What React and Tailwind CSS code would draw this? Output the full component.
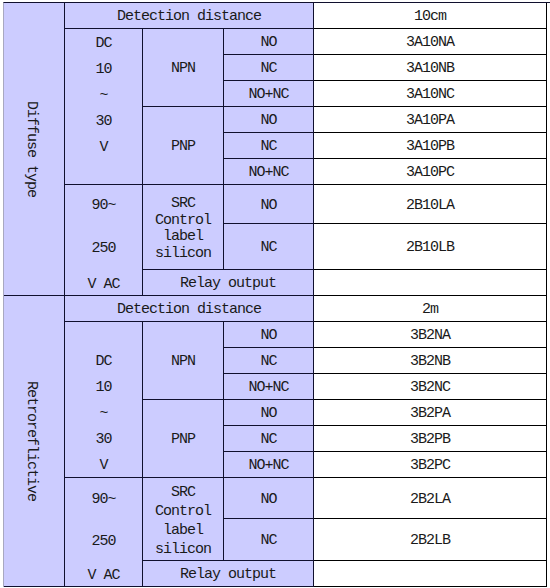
import React from 'react';

const rowStart = {
  1: 'row-start-1', 2: 'row-start-2', 3: 'row-start-3', 4: 'row-start-4', 5: 'row-start-5',
  6: 'row-start-6', 7: 'row-start-7', 8: 'row-start-8', 9: 'row-start-9', 10: 'row-start-10',
};

const sections = [
  {
    title: 'Diffuse type',
    distance: '10cm',
    rows: 'grid-rows-[26px_26px_26px_26px_26px_26px_26px_39px_46px_26px]',
    top: true,
    dcAlign: 'justify-start',
    acHeights: ['h-[39px]', 'h-[46px]'],
    srcLeading: 'leading-[16.5px]',
    codes: ['3A10NA', '3A10NB', '3A10NC', '3A10PA', '3A10PB', '3A10PC'],
    relayCodes: ['2B10LA', '2B10LB'],
  },
  {
    title: 'Retroreflictive',
    distance: '2m',
    rows: 'grid-rows-[26px_26px_26px_26px_26px_26px_26px_41px_42px_26px]',
    top: false,
    dcAlign: 'justify-end',
    acHeights: ['h-[41px]', 'h-[42px]'],
    srcLeading: 'leading-[19px]',
    codes: ['3B2NA', '3B2NB', '3B2NC', '3B2PA', '3B2PB', '3B2PC'],
    relayCodes: ['2B2LA', '2B2LB'],
  },
];

const contacts = ['NO', 'NC', 'NO+NC', 'NO', 'NC', 'NO+NC'];

function Cell({ className = '', white, children }) {
  return (
    <div
      className={`flex items-center justify-center pt-[4px] border-r border-b ${
        white ? 'bg-white border-[#000000]' : 'bg-[#ccccff] border-[#10102e]'
      } ${className}`}
    >
      {children}
    </div>
  );
}

function Section({ s }) {
  return (
    <div
      className={`grid grid-cols-[61px_78px_81px_90px_233px] ${s.rows} border-l border-l-[#a8a8c0] ${
        s.top ? 'border-t border-t-[#10102e]' : ''
      }`}
    >
      {/* vertical type label */}
      <Cell className="col-start-1 row-start-1 row-span-10 !pt-0 pr-[7px]">
        <span className="[writing-mode:vertical-rl]">{s.title}</span>
      </Cell>

      <Cell className="col-start-2 col-span-3 row-start-1">Detection distance</Cell>
      <Cell white className="col-start-5 row-start-1">{s.distance}</Cell>

      {/* DC supply */}
      <Cell className={`col-start-2 row-start-2 row-span-6 !pt-0 !flex-col ${s.dcAlign}`}>
        {['DC', '10', '~', '30', 'V'].map((t, i) => (
          <div key={i} className="h-[26px] pt-[4px] shrink-0 flex items-center justify-center">{t}</div>
        ))}
      </Cell>
      <Cell className="col-start-3 row-start-2 row-span-3">NPN</Cell>
      <Cell className="col-start-3 row-start-5 row-span-3">PNP</Cell>

      {contacts.map((c, i) => (
        <Cell key={'c' + i} className={`col-start-4 ${rowStart[i + 2]}`}>{c}</Cell>
      ))}
      {s.codes.map((c, i) => (
        <Cell white key={'k' + i} className={`col-start-5 ${rowStart[i + 2]}`}>{c}</Cell>
      ))}

      {/* AC supply */}
      <Cell className="col-start-2 row-start-8 row-span-3 !pt-0 !flex-col !justify-start">
        <div className={`${s.acHeights[0]} pt-[4px] shrink-0 flex items-center`}>90~</div>
        <div className={`${s.acHeights[1]} pt-[4px] shrink-0 flex items-center`}>250</div>
        <div className="flex-1 pt-[4px] flex items-center">V AC</div>
      </Cell>
      <Cell className={`col-start-3 row-start-8 row-span-2 text-center ${s.srcLeading}`}>
        <div>
          SRC<br />Control<br />label<br />silicon
        </div>
      </Cell>
      <Cell className="col-start-4 row-start-8">NO</Cell>
      <Cell className="col-start-4 row-start-9">NC</Cell>
      <Cell white className="col-start-5 row-start-8">{s.relayCodes[0]}</Cell>
      <Cell white className="col-start-5 row-start-9">{s.relayCodes[1]}</Cell>

      <Cell className="col-start-3 col-span-2 row-start-10">Relay output</Cell>
      <Cell white className="col-start-5 row-start-10" />
    </div>
  );
}

export default function App() {
  return (
    <div className="w-[550px] h-[588px] bg-white pt-[2px] pl-[3px] text-[15px] tracking-[-1px] text-[#1a1a1a] font-['Liberation_Mono',monospace] whitespace-nowrap">
      {sections.map((s, i) => (
        <Section key={i} s={s} />
      ))}
    </div>
  );
}
